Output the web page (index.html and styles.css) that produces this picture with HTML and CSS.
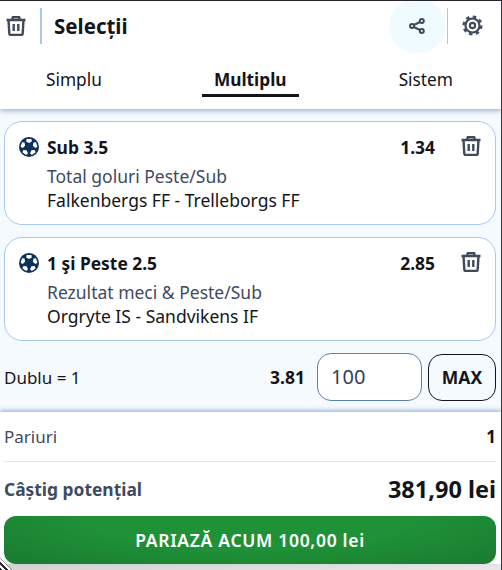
FILE: index.html
```html
<!DOCTYPE html>
<html lang="en">
<head>
    <meta charset="UTF-8">
    <meta name="viewport" content="width=device-width, initial-scale=1.0">
    <title>Selecții</title>
    <link rel="stylesheet" href="styles.css">
</head>
<body>
<div class="page">
    <div class="top">
        <div class="header">
            <button class="clear-btn">
                <svg class="trash" viewBox="0 0 20 20"><path d="M.5 4h19M6.500 3.500V2c0-.6.4-1 1-1h5c.6 0 1 .4 1 1v1.500M2.500 4l.8 13.500c0 .9.7 1.500 1.500 1.500h10.400c.8 0 1.500-.6 1.500-1.500L17.500 4M7.700 8v7M12.300 8v7"/></svg>
            </button>
            <h1 class="title">Selecții</h1>
            <button class="share-btn">
                <svg class="share" viewBox="0 0 16 16"><circle cx="12.800" cy="3" r="2"/><circle cx="3" cy="8" r="2"/><circle cx="12.800" cy="13" r="2"/><path d="M4.800 7 11 4M4.800 9l6.200 3"/></svg>
            </button>
            <div class="gear-box">
                <svg class="gear" viewBox="0 0 24 24"><circle cx="12" cy="12" r="8"/><circle class="teeth" cx="12" cy="12" r="10.200"/><circle cx="12" cy="12" r="3"/></svg>
            </div>
        </div>
        <div class="tabs">
            <div class="tab">Simplu</div>
            <div class="tab active">Multiplu</div>
            <div class="tab">Sistem</div>
        </div>
    </div>

    <div class="slip">
        <div class="card">
            <div class="card-head">
                <svg class="ball" viewBox="0 0 20 20"><circle cx="10" cy="10" r="10"/><polygon class="patch" points="7.600,1.900 12.400,1.900 12.800,4.400 10,5.900 7.200,4.400"/><polygon class="patch" points="7.600,1.900 12.400,1.900 12.800,4.400 10,5.900 7.200,4.400" transform="rotate(72 10 10)"/><polygon class="patch" points="7.600,1.900 12.400,1.900 12.800,4.400 10,5.900 7.200,4.400" transform="rotate(144 10 10)"/><polygon class="patch" points="7.600,1.900 12.400,1.900 12.800,4.400 10,5.900 7.200,4.400" transform="rotate(216 10 10)"/><polygon class="patch" points="7.600,1.900 12.400,1.900 12.800,4.400 10,5.900 7.200,4.400" transform="rotate(288 10 10)"/></svg>
                <span class="pick">Sub 3.5</span>
                <span class="odd">1.34</span>
                <svg class="trash" viewBox="0 0 20 20"><path d="M.5 4h19M6.500 3.500V2c0-.6.4-1 1-1h5c.6 0 1 .4 1 1v1.500M2.500 4l.8 13.500c0 .9.7 1.500 1.500 1.500h10.400c.8 0 1.500-.6 1.500-1.500L17.500 4M7.700 8v7M12.300 8v7"/></svg>
            </div>
            <div class="market">Total goluri Peste/Sub</div>
            <div class="match">Falkenbergs FF - Trelleborgs FF</div>
        </div>
        <div class="card">
            <div class="card-head">
                <svg class="ball" viewBox="0 0 20 20"><circle cx="10" cy="10" r="10"/><polygon class="patch" points="7.600,1.900 12.400,1.900 12.800,4.400 10,5.900 7.200,4.400"/><polygon class="patch" points="7.600,1.900 12.400,1.900 12.800,4.400 10,5.900 7.200,4.400" transform="rotate(72 10 10)"/><polygon class="patch" points="7.600,1.900 12.400,1.900 12.800,4.400 10,5.900 7.200,4.400" transform="rotate(144 10 10)"/><polygon class="patch" points="7.600,1.900 12.400,1.900 12.800,4.400 10,5.900 7.200,4.400" transform="rotate(216 10 10)"/><polygon class="patch" points="7.600,1.900 12.400,1.900 12.800,4.400 10,5.900 7.200,4.400" transform="rotate(288 10 10)"/></svg>
                <span class="pick">1 şi Peste 2.5</span>
                <span class="odd">2.85</span>
                <svg class="trash" viewBox="0 0 20 20"><path d="M.5 4h19M6.500 3.500V2c0-.6.4-1 1-1h5c.6 0 1 .4 1 1v1.500M2.500 4l.8 13.500c0 .9.7 1.500 1.500 1.500h10.400c.8 0 1.500-.6 1.500-1.500L17.500 4M7.700 8v7M12.300 8v7"/></svg>
            </div>
            <div class="market">Rezultat meci &amp; Peste/Sub</div>
            <div class="match">Orgryte IS - Sandvikens IF</div>
        </div>
        <div class="stake-row">
            <span class="stake-label">Dublu = 1</span>
            <span class="stake-odd">3.81</span>
            <div class="stake-input">100</div>
            <button class="max-btn">MAX</button>
        </div>
    </div>

    <div class="summary">
        <div class="row">
            <span class="row-label">Pariuri</span>
            <span class="row-count">1</span>
        </div>
        <div class="row win">
            <span class="win-label">Câștig potențial</span>
            <span class="win-value">381,90 lei</span>
        </div>
        <button class="bet-btn">PARIAZĂ ACUM 100,00 lei</button>
    </div>
    <div class="bottom-strip"></div>
    <div class="hatch"></div>
</div>
</body>
</html>
```
FILE: styles.css
```css
html, body {
    margin: 0;
    padding: 0;
}
body {
    font-family: "Noto Sans", sans-serif;
    color: #14151a;
    background: #fff;
}
button {
    font-family: inherit;
    border: 0;
    background: none;
    padding: 0;
}
.page {
    width: 502px;
    height: 570px;
    box-sizing: border-box;
    border-top: 1px solid #26262a;
    border-right: 1px solid #3a3a3e;
    display: flex;
    flex-direction: column;
    overflow: hidden;
    background: #f5faff;
    position: relative;
}

/* header + tabs */
.top {
    height: 108px;
    background: #fff;
    box-shadow: 0 2px 5px rgba(90, 120, 170, 0.55);
    position: relative;
}
.header {
    height: 49px;
    display: flex;
    align-items: center;
}
.trash {
    width: 20px;
    height: 20px;
    fill: none;
    stroke: #3f4a5a;
    stroke-width: 2.400;
    stroke-linejoin: round;
    flex: none;
}
.card-head .trash {
    margin-top: -2px;
}
.clear-btn {
    width: 42px;
    height: 36px;
    padding-left: 6px;
    box-sizing: border-box;
    border-right: 2px solid #a9c7ef;
    display: flex;
    align-items: center;
}
.title {
    margin: 0 0 0 12px;
    font-size: 20.500px;
    line-height: 28px;
    font-weight: 700;
    flex: 1;
}
.share-btn {
    width: 56px;
    height: 56px;
    flex: none;
    border-radius: 50%;
    background: #f0fbff;
    display: flex;
    align-items: center;
    justify-content: center;
}
.share {
    width: 16px;
    height: 16px;
    fill: none;
    stroke: #3f4a5a;
    stroke-width: 2;
}
.gear-box {
    width: 54px;
    height: 36px;
    margin-left: 2px;
    border-left: 1px solid #a9c7ef;
    box-sizing: border-box;
    display: flex;
    align-items: center;
    padding-left: 14px;
}
.gear {
    width: 21px;
    height: 21px;
    fill: none;
    stroke: #3f4a5a;
    stroke-width: 2.500;
}
.gear .teeth {
    stroke-dasharray: 4 4.010;
    stroke-width: 2.600;
}
.tabs {
    display: flex;
    justify-content: space-between;
    padding: 0 48px 0 46px;
    height: 59px;
}
.tab {
    font-size: 17.300px;
    line-height: 24px;
    padding-top: 18px;
    position: relative;
    height: 24px;
}
.tab.active {
    font-weight: 700;
}
.tab.active::after {
    content: "";
    position: absolute;
    left: -12px;
    right: -12px;
    top: 44px;
    height: 3px;
    background: #14151a;
}

/* selections */
.slip {
    flex: 1;
    padding: 12px 5px 0 4px;
    display: flex;
    flex-direction: column;
    gap: 12px;
}
.card {
    height: 104px;
    box-sizing: border-box;
    background: #fff;
    border: 1px solid #a9c7ef;
    border-radius: 18px;
    padding: 12px 14px 0 14px;
}
.card-head {
    display: flex;
    align-items: center;
    height: 26px;
}
.ball {
    width: 20px;
    height: 20px;
    flex: none;
    fill: #0d2f5c;
}
.ball .patch {
    fill: #fff;
}
.pick {
    font-size: 17.400px;
    font-weight: 700;
    margin-left: 8px;
    flex: 1;
}
.odd {
    font-size: 17.400px;
    font-weight: 700;
    margin-right: 26px;
}
.market {
    margin: 4px 0 0 28px;
    font-size: 17.500px;
    line-height: 24px;
    color: #3f4a5f;
}
.match {
    margin-left: 28px;
    font-size: 17.500px;
    line-height: 24px;
}
.stake-row {
    display: flex;
    align-items: center;
    height: 48px;
}
.stake-label {
    font-size: 17px;
    flex: 1;
}
.stake-odd {
    font-size: 17.500px;
    font-weight: 700;
    margin-right: 12px;
}
.stake-input {
    width: 105px;
    height: 48px;
    box-sizing: border-box;
    background: #fff;
    border: 1px solid #5f7fb0;
    border-radius: 14px;
    font-size: 20px;
    line-height: 46px;
    padding-left: 13px;
    color: #333d4f;
}
.max-btn {
    width: 68px;
    height: 47px;
    margin-left: 6px;
    border: 1px solid #14151a;
    border-radius: 14px;
    font-size: 17.500px;
    font-weight: 700;
    color: #14151a;
}

/* totals */
.summary {
    background: #fff;
    box-shadow: 0 -2px 4px rgba(90, 120, 170, 0.5);
    height: 152px;
    padding: 0 5px 0 4px;
    position: relative;
}
.row {
    display: flex;
    justify-content: space-between;
    align-items: center;
    height: 49px;
    border-bottom: 1px solid #dfe6ee;
}
.row-label {
    font-size: 17px;
    color: #3f4a5f;
}
.row-count {
    font-size: 17px;
    font-weight: 700;
}
.row.win {
    border: 0;
    height: 54px;
}
.win-label {
    font-size: 17.400px;
    font-weight: 700;
    color: #3f4a5f;
}
.win-value {
    font-size: 23.500px;
    font-weight: 700;
}
.bet-btn {
    display: block;
    width: 492px;
    height: 48px;
    border-radius: 12px;
    background: radial-gradient(ellipse at center top, #1f9238 45%, #1a7a30 100%);
    color: #fff;
    font-size: 17.500px;
    font-weight: 600;
    letter-spacing: 0.7px;
}
.bottom-strip {
    height: 6px;
    background: linear-gradient(90deg, #d4d4d4, #e8e8e8);
}
.hatch {
    position: absolute;
    left: 0;
    bottom: 0;
    width: 12px;
    height: 12px;
    clip-path: polygon(0 0, 0 100%, 100% 100%);
    background: repeating-linear-gradient(45deg, #2a2a2e 0 2px, #fff 2px 4px);
}
```
